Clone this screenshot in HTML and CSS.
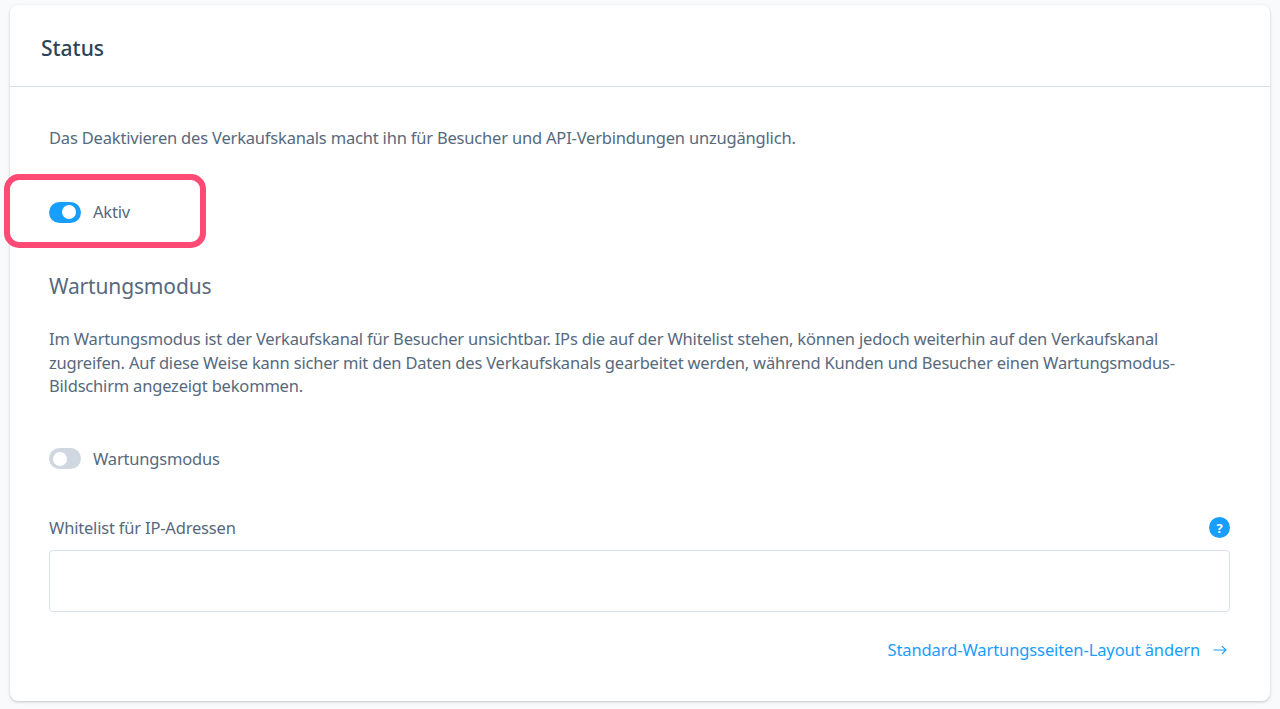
FILE: index.html
```html
<!DOCTYPE html>
<html lang="de">
<head>
<meta charset="utf-8">
<title>Status</title>
<link rel="stylesheet" href="styles.css">
</head>
<body>
<main class="card">
  <header class="card-header"><h2 class="card-title">Status</h2></header>
  <section class="card-body">
    <p class="text intro">Das Deaktivieren des Verkaufskanals macht ihn für Besucher und API-Verbindungen unzugänglich.</p>
    <div class="switch-row active-row">
      <span class="switch on"><span class="knob"></span></span>
      <span class="text switch-label">Aktiv</span>
    </div>
    <h3 class="subtitle">Wartungsmodus</h3>
    <p class="text desc">Im Wartungsmodus ist der Verkaufskanal für Besucher unsichtbar. IPs die auf der Whitelist stehen, können jedoch weiterhin auf den Verkaufskanal<br>zugreifen. Auf diese Weise kann sicher mit den Daten des Verkaufskanals gearbeitet werden, während Kunden und Besucher einen Wartungsmodus-<br>Bildschirm angezeigt bekommen.</p>
    <div class="switch-row maint-row">
      <span class="switch off"><span class="knob"></span></span>
      <span class="text switch-label">Wartungsmodus</span>
    </div>
    <div class="field-head">
      <label class="text">Whitelist für IP-Adressen</label>
      <span class="help">?</span>
    </div>
    <div class="input"></div>
    <div class="link-row">
      <a class="link" href="#">Standard-Wartungsseiten-Layout ändern</a>
      <svg class="arrow" width="16" height="12" viewBox="0 0 16 12" fill="none" stroke="#189eff" stroke-width="1.1"><path d="M1.5 6H14M10 2.2 14 6l-4 3.8"/></svg>
    </div>
  </section>
</main>
<div class="highlight"></div>
</body>
</html>
```

FILE: styles.css
```css
* { box-sizing: border-box; }
html, body { height: 100%; }
body {
  margin: 0;
  padding: 5px 10px 0;
  background: #f9fafb;
  font-family: "Noto Sans", "Liberation Sans", sans-serif;
  overflow: hidden;
}
.card {
  height: 696px;
  background: #fff;
  border-radius: 8px;
  box-shadow: 0 1px 3px rgba(0, 0, 0, .22);
}
.card-header {
  height: 82px;
  padding: 5px 31px 0;
  display: flex;
  align-items: center;
  border-bottom: 1px solid #d9e1e8;
}
.card-title {
  margin: 0;
  font-size: 21px;
  font-weight: 500;
  color: #2f4358;
  letter-spacing: 0;
}
.card-body { padding: 39px 40px 0 39px; }
.text {
  margin: 0;
  font-size: 16.5px;
  line-height: 24px;
  color: #56697d;
  letter-spacing: -.19px;
}
.switch-row { display: flex; align-items: center; gap: 12px; height: 24px; }
.active-row { margin-top: 50px; }
.switch { width: 32px; height: 21px; border-radius: 11px; display: flex; align-items: center; padding: 0 4px; }
.switch.on { background: #189eff; justify-content: flex-end; padding-right: 5px; }
.switch.off { background: #cfd8e0; }
.knob { width: 14px; height: 14px; border-radius: 50%; background: #fff; }
.subtitle {
  margin: 47px 0 0;
  font-size: 21px;
  line-height: 30px;
  font-weight: 400;
  color: #56697d;
  letter-spacing: -.15px;
}
.desc { margin-top: 26px; line-height: 23.5px; }
.maint-row { margin-top: 49px; }
.field-head { display: flex; justify-content: space-between; align-items: center; margin-top: 45px; height: 24px; }
.help {
  width: 21px; height: 21px; border-radius: 50%;
  background: #189eff; color: #fff;
  font-size: 13px; font-weight: 700;
  display: flex; align-items: center; justify-content: center;
}
.input { height: 62px; margin-top: 10px; border: 1px solid #d9e1e8; border-radius: 4px; background: #fff; }
.link-row { display: flex; justify-content: flex-end; align-items: center; gap: 12px; margin-top: 26px; padding-right: 2px; height: 24px; }
.link { font-size: 16.5px; line-height: 24px; color: #189eff; text-decoration: none; letter-spacing: -.1px; }
.highlight {
  position: absolute;
  left: 4px; top: 174px;
  width: 202px; height: 74px;
  border: 6px solid #ff4a75;
  border-radius: 15px;
}
```
